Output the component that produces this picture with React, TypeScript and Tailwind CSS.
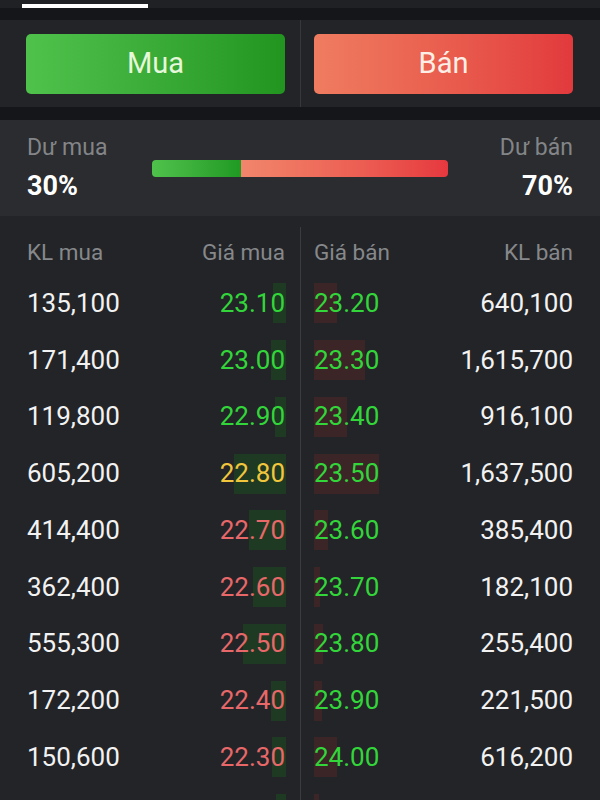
import React from 'react';

type Row = {
  buyVol: string;
  buyPrice: string;
  buyTone: 'up' | 'ref' | 'down';
  buyBar: number;
  sellPrice: string;
  sellBar: number;
  sellVol: string;
};

const rows: Row[] = [
  { buyVol: '135,100', buyPrice: '23.10', buyTone: 'up', buyBar: 13, sellPrice: '23.20', sellBar: 23, sellVol: '640,100' },
  { buyVol: '171,400', buyPrice: '23.00', buyTone: 'up', buyBar: 15, sellPrice: '23.30', sellBar: 51, sellVol: '1,615,700' },
  { buyVol: '119,800', buyPrice: '22.90', buyTone: 'up', buyBar: 11, sellPrice: '23.40', sellBar: 33, sellVol: '916,100' },
  { buyVol: '605,200', buyPrice: '22.80', buyTone: 'ref', buyBar: 52, sellPrice: '23.50', sellBar: 65, sellVol: '1,637,500' },
  { buyVol: '414,400', buyPrice: '22.70', buyTone: 'down', buyBar: 37, sellPrice: '23.60', sellBar: 14, sellVol: '385,400' },
  { buyVol: '362,400', buyPrice: '22.60', buyTone: 'down', buyBar: 33, sellPrice: '23.70', sellBar: 6, sellVol: '182,100' },
  { buyVol: '555,300', buyPrice: '22.50', buyTone: 'down', buyBar: 43, sellPrice: '23.80', sellBar: 9, sellVol: '255,400' },
  { buyVol: '172,200', buyPrice: '22.40', buyTone: 'down', buyBar: 15, sellPrice: '23.90', sellBar: 8, sellVol: '221,500' },
  { buyVol: '150,600', buyPrice: '22.30', buyTone: 'down', buyBar: 14, sellPrice: '24.00', sellBar: 23, sellVol: '616,200' },
  { buyVol: '', buyPrice: '', buyTone: 'down', buyBar: 10, sellPrice: '', sellBar: 5, sellVol: '' },
];

const toneClass = {
  up: 'text-[#33d63a]',
  ref: 'text-[#f2c63c]',
  down: 'text-[#e8686a]',
};

const App = () => {
  return (
    <div className="w-[600px] h-[800px] overflow-hidden bg-[#222427] font-['Roboto',sans-serif]">
      {/* Tab gạch chân */}
      <div className="h-[8px] bg-[#1f2124] pt-[4px] pl-[22px]">
        <div className="w-[126px] h-[4px] bg-white" />
      </div>
      <div className="h-[12px] bg-[#15161a]" />

      {/* Nút Mua / Bán */}
      <div className="h-[87px] flex bg-[#222427]">
        <div className="w-[300px] flex items-center pl-[26px] pr-[15px]">
          <button className="w-full h-[60px] rounded-[5px] bg-gradient-to-r from-[#4fc24c] to-[#21951f] text-[29px] text-[#e6f7da]">
            Mua
          </button>
        </div>
        <div className="w-px bg-[#36383c]" />
        <div className="flex-1 flex items-center pl-[13px] pr-[27px]">
          <button className="w-full h-[60px] rounded-[5px] bg-gradient-to-r from-[#ef7c60] to-[#e2393d] text-[29px] text-[#fdeee6]">
            Bán
          </button>
        </div>
      </div>
      <div className="h-[13px] bg-[#15161a]" />

      {/* Dư mua / Dư bán */}
      <div className="h-[96px] flex items-center px-[27px] bg-[#2a2c2f]">
        <div className="w-[125px] flex flex-col">
          <span className="text-[23px] leading-[24px] text-[#838588]">Dư mua</span>
          <span className="mt-[12px] text-[27px] leading-[28px] font-bold text-white">30%</span>
        </div>
        <div className="w-[296px] h-[17px] flex rounded-[4px] overflow-hidden">
          <div className="w-[30%] bg-gradient-to-r from-[#4fc24c] to-[#1f9a22]" />
          <div className="flex-1 bg-gradient-to-r from-[#f1866c] to-[#e6383f]" />
        </div>
        <div className="flex-1 flex flex-col items-end">
          <span className="text-[23px] leading-[24px] text-[#838588]">Dư bán</span>
          <span className="mt-[12px] text-[27px] leading-[28px] font-bold text-white">70%</span>
        </div>
      </div>

      {/* Sổ lệnh */}
      <div className="flex pt-[11px]">
        <div className="w-[300px] pl-[27px] pr-[15px]">
          <div className="h-[48px] pt-[13px] flex justify-between text-[22.5px] leading-[24px] text-[#86888b]">
            <span>KL mua</span>
            <span>Giá mua</span>
          </div>
          {rows.map((r, i) => (
            <div key={i} className="h-[56.75px] flex items-center justify-between text-[26px]">
              <span className="text-[#f2f2f2]">{r.buyVol}</span>
              <div className="relative h-[40px] flex items-center">
                <div className="absolute right-[-1px] top-0 h-[40px] bg-[#1f3a23]" style={{ width: r.buyBar }} />
                <span className={`relative ${toneClass[r.buyTone]}`}>{r.buyPrice}</span>
              </div>
            </div>
          ))}
        </div>
        <div className="w-px self-stretch bg-[#3a3c40]" />
        <div className="flex-1 pl-[13px] pr-[27px]">
          <div className="h-[48px] pt-[13px] flex justify-between text-[22.5px] leading-[24px] text-[#86888b]">
            <span>Giá bán</span>
            <span>KL bán</span>
          </div>
          {rows.map((r, i) => (
            <div key={i} className="h-[56.75px] flex items-center justify-between text-[26px]">
              <div className="relative h-[40px] flex items-center">
                <div className="absolute left-0 top-0 h-[40px] bg-[#3b2527]" style={{ width: r.sellBar }} />
                <span className="relative text-[#33d63a]">{r.sellPrice}</span>
              </div>
              <span className="text-[#f2f2f2]">{r.sellVol}</span>
            </div>
          ))}
        </div>
      </div>
    </div>
  );
};

export default App;
